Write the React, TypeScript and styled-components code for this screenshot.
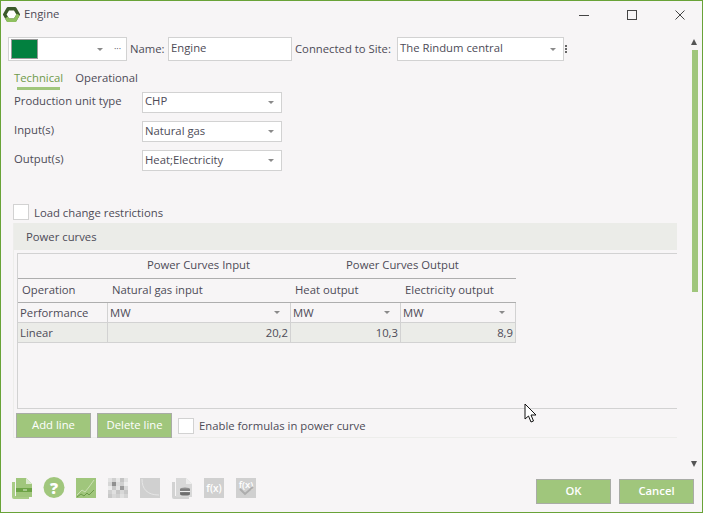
import React from "react";
import styled, { createGlobalStyle } from "styled-components";

const Global = createGlobalStyle`
  html, body { margin: 0; padding: 0; background: #f7f5f6; }
  * { box-sizing: border-box; }
`;

const Win = styled.div`
  position: relative;
  width: 703px;
  height: 513px;
  border: 1px solid #69a338;
  background: #f7f5f6;
  display: flex;
  flex-direction: column;
  font-family: "Open Sans", "Noto Sans", sans-serif;
  font-size: 11.3px;
  color: #4d4b57;
  overflow: hidden;
`;

const TitleBar = styled.div`
  height: 27px;
  flex: none;
  display: flex;
  align-items: center;
  padding: 0 17px 0 2px;
  gap: 4px;
`;
const TitleText = styled.span`
  flex: 1;
  padding-bottom: 2px;
`;
const WinButtons = styled.div`
  display: flex;
  gap: 38px;
  align-items: center;
`;

const Main = styled.div`
  flex: 1;
  display: flex;
  min-height: 0;
`;
const Content = styled.div`
  width: 676px;
  flex: none;
  padding: 9px 0 0 7px;
  display: flex;
  flex-direction: column;
`;

const TopRow = styled.div`
  display: flex;
  align-items: center;
  height: 24px;
`;
const Box = styled.div<{ $w: number; $h?: number }>`
  width: ${(p) => p.$w}px;
  height: ${(p) => p.$h ?? 24}px;
  flex: none;
  border: 1px solid #d2d2d2;
  background: #fff;
  display: flex;
  align-items: center;
  padding: 0 7px 0 1px;
`;
const BoxText = styled.span<{ $up?: number }>`
  flex: 1;
  padding: 0 0 ${(p) => p.$up ?? 2}px 1px;
  white-space: nowrap;
`;
const Swatch = styled.div`
  width: 27px;
  height: 20px;
  background: #02803f;
  border: 1px solid #9a9a9a;
  margin-left: 1px;
`;
const Caret = styled.i`
  width: 0;
  height: 0;
  border-left: 3px solid transparent;
  border-right: 3px solid transparent;
  border-top: 3px solid #8a8a8a;
  flex: none;
`;
const Ellipsis = styled.span`
  font-size: 9px;
  line-height: 1;
  margin-left: 11px;
  margin-right: -2px;
  padding-bottom: 2px;
`;
const TopLabel = styled.span<{ $l: number; $w: number }>`
  margin-left: ${(p) => p.$l}px;
  width: ${(p) => p.$w}px;
  flex: none;
  white-space: nowrap;
  padding-bottom: 2px;
`;
const Dots = styled.div`
  width: 2px;
  height: 8px;
  margin-left: 1px;
  background: repeating-linear-gradient(#666 0 2px, transparent 2px 3px);
`;

const Tabs = styled.div`
  display: flex;
  margin: 8px 0 0 5px;
  gap: 10px;
`;
const Tab = styled.div<{ $active?: boolean }>`
  position: relative;
  height: 20px;
  line-height: 17px;
  color: ${(p) => (p.$active ? "#6f9a4a" : "#4d4b57")};
  padding: 0 1px;
  ${(p) =>
    p.$active &&
    `&::after{content:"";position:absolute;left:4px;right:4px;bottom:-1px;height:3px;background:#a0c67c;}`}
`;

const FormRow = styled.div`
  display: flex;
  align-items: center;
  height: 21px;
  margin: 0 0 8px 6px;
`;
const FormLabel = styled.span`
  width: 128px;
  flex: none;
  padding-bottom: 4px;
`;
const Form = styled.div`
  margin-top: 3px;
`;

const CheckRow = styled.div<{ $m: number }>`
  display: flex;
  align-items: center;
  gap: 5px;
  margin-top: ${(p) => p.$m}px;
  margin-left: 5px;
`;
const Check = styled.div`
  width: 16px;
  height: 16px;
  background: #fff;
  border: 1px solid #d2d2d2;
  flex: none;
`;

const Group = styled.div`
  margin: 3px 0 0 5px;
  width: 664px;
  height: 215px;
  border-left: 1px solid #ededeb;
  border-bottom: 1px solid #ededeb;
  display: flex;
  flex-direction: column;
`;
const GroupHead = styled.div`
  height: 27px;
  flex: none;
  background: #ebece8;
  display: flex;
  align-items: center;
  padding-left: 12px;
`;
const GridWrap = styled.div`
  margin: 3px 0 0 3px;
  height: 156px;
  border-top: 1px solid #d2d2d2;
  border-left: 1px solid #d2d2d2;
  border-bottom: 1px solid #d2d2d2;
  flex: none;
`;
const Table = styled.div`
  width: 498px;
  display: grid;
  grid-template-columns: 90px 183px 110px 115px;
  grid-template-rows: 25px 24px 20px 20px;
`;
const BandCell = styled.div<{ $span?: number }>`
  display: flex;
  align-items: center;
  justify-content: center;
  grid-column: span ${(p) => p.$span ?? 1};
  border-bottom: 1px solid #aeaeae;
  padding: 0 2px 3px 0;
`;
const HeadCell = styled.div<{ $pad: number }>`
  display: flex;
  align-items: center;
  padding: 0 0 3px ${(p) => p.$pad}px;
  border-bottom: 1px solid #aeaeae;
`;
const Cell = styled.div<{ $shade?: boolean; $right?: boolean }>`
  display: flex;
  align-items: center;
  justify-content: ${(p) => (p.$right ? "flex-end" : "space-between")};
  padding: 0 ${(p) => (p.$right ? 2 : 0)}px 1px 2px;
  border-right: 1px solid #d2d2d2;
  border-bottom: 1px solid #d2d2d2;
  background: ${(p) => (p.$shade ? "#ebece8" : "transparent")};
`;
const UnitCaret = styled(Caret)`
  margin-right: 10px;
`;

const ActionRow = styled.div`
  display: flex;
  align-items: center;
  margin: 4px 0 0 2px;
`;
const Btn = styled.button<{ $m?: number }>`
  width: 75px;
  height: 25px;
  flex: none;
  margin-left: ${(p) => p.$m ?? 0}px;
  padding: 0 0 2px;
  background: #a0c67c;
  border: 1px solid #a9aca6;
  color: #fff;
  font: inherit;
`;
const BoldBtn = styled(Btn)`
  font-weight: 600;
`;
const FormulaCheck = styled.div`
  display: flex;
  align-items: center;
  gap: 5px;
  margin-left: 6px;
`;

const Bar = styled.div`
  flex: none;
  width: 24px;
  display: flex;
  flex-direction: column;
  align-items: flex-end;
  padding: 11px 3px 0 0;
`;
const Arrow = styled.i<{ $down?: boolean }>`
  width: 0;
  height: 0;
  margin-right: 1px;
  border-left: 3px solid transparent;
  border-right: 3px solid transparent;
  ${(p) => (p.$down ? "border-top: 6px solid #555;" : "border-bottom: 6px solid #555;")}
`;
const Thumb = styled.div`
  width: 6px;
  height: 242px;
  margin: 5px 0 169px;
  background: #a0c67c;
`;

const Footer = styled.div`
  height: 41px;
  flex: none;
  display: flex;
  align-items: flex-start;
  padding: 8px 8px 0 11px;
`;
const Icons = styled.div`
  display: flex;
  gap: 12px;
  flex: 1;
  margin-top: -1px;
`;
const HelpSlot = styled.span`
  display: flex;
  margin: -1px -1px 0 -1px;
`;
const CursorMark = styled.svg`
  position: absolute;
  left: 523px;
  top: 402px;
`;

const Logo = () => (
  <svg width="17" height="17" viewBox="0 0 17 17">
    <path d="M5 2.8h7l3.300 5.700-3.300 5.700H5L1.700 8.500z" fill="#fff" stroke="#3c5a2b" strokeWidth="3.400" strokeLinejoin="round" />
    <path d="M15.300 8.500l-3.300 5.700H5L3.400 11.500" fill="none" stroke="#8fc05f" strokeWidth="3.400" />
  </svg>
);

const DocStack = () => (
  <svg width="20" height="21" viewBox="0 0 20 21">
    <path d="M0 4h3v14h14v3H2a2 2 0 0 1-2-2z" fill="#a9cc87" />
    <path d="M4 0h10l6 6v13H4z" fill="#a0c67c" />
    <path d="M14 0l6 6h-6z" fill="#dcead0" />
    <rect x="4" y="10" width="16" height="4" fill="#6da346" />
    <rect x="11" y="11.500" width="4" height="1" fill="#dfeed0" />
  </svg>
);
const Help = () => (
  <svg width="22" height="21" viewBox="0 0 22 21">
    <circle cx="11" cy="10.500" r="10.500" fill="#a0c67c" />
    <text x="11" y="16.500" textAnchor="middle" fontFamily="Open Sans" fontWeight="800" fontSize="16" fill="#fff">?</text>
  </svg>
);
const Chart = () => (
  <svg width="20" height="20" viewBox="0 0 20 20">
    <rect width="20" height="20" fill="#a0c67c" />
    <path d="M1 17l5-5 3 2 4-5 5-7" fill="none" stroke="#d5e6c2" strokeWidth="0.800" />
    <path d="M1 19l4-3 3 2 3-3 2 2 5-5" fill="none" stroke="#5f8f3c" strokeWidth="0.800" />
  </svg>
);
const Heat = () => {
  const shades = [
    "#e2e2e2","#d0d0d0","#e8e8e8","#c4c4c4","#e2e2e2",
    "#d6d6d6","#8f8f8f","#dcdcdc","#d0d0d0","#eeeeee",
    "#ececec","#c8c8c8","#e4e4e4","#9a9a9a","#d8d8d8",
    "#d0d0d0","#e0e0e0","#c6c6c6","#d8d8d8","#c8c8c8",
    "#c8c8c8","#d8d8d8","#d0d0d0","#e0e0e0","#d4d4d4",
  ];
  return (
    <svg width="20" height="20" viewBox="0 0 20 20">
      {shades.map((c, i) => (
        <rect key={i} x={(i % 5) * 4} y={Math.floor(i / 5) * 4} width="4" height="4" fill={c} />
      ))}
    </svg>
  );
};
const Curve = () => (
  <svg width="20" height="20" viewBox="0 0 20 20">
    <rect width="20" height="20" fill="#d0d0d0" />
    <path d="M2 1c0 10 5 16 17 16" fill="none" stroke="#e6e6e6" strokeWidth="1" />
  </svg>
);
const DocDb = () => (
  <svg width="20" height="21" viewBox="0 0 20 21">
    <path d="M0 4h3v14h14v3H2a2 2 0 0 1-2-2z" fill="#d2d2d2" />
    <path d="M4 0h10l6 6v13H4z" fill="#d8d8d8" />
    <path d="M14 0l6 6h-6z" fill="#eeeeee" />
    <ellipse cx="13" cy="11" rx="5" ry="1.600" fill="#8f8f8f" />
    <rect x="8" y="11" width="10" height="5" fill="#808080" />
    <ellipse cx="13" cy="16" rx="5" ry="1.600" fill="#6e6e6e" />
    <rect x="8" y="13" width="10" height="1" fill="#eeeeee" />
  </svg>
);
const Fx = () => (
  <svg width="20" height="20" viewBox="0 0 20 20">
    <rect width="20" height="20" fill="#d0d0d0" />
    <text x="10" y="14" textAnchor="middle" fontFamily="Open Sans" fontWeight="600" fontSize="10" fill="#fff">f(x)</text>
  </svg>
);
const FxCheck = () => (
  <svg width="20" height="20" viewBox="0 0 20 20">
    <rect width="20" height="20" fill="#d0d0d0" />
    <text x="10" y="10" textAnchor="middle" fontFamily="Open Sans" fontWeight="600" fontSize="9.500" fill="#fff">f(x)</text>
    <path d="M4 11l5 5 8-7" fill="none" stroke="#adadad" strokeWidth="2" />
  </svg>
);

export default function App() {
  return (
    <Win>
      <Global />
      <TitleBar>
        <Logo />
        <TitleText>Engine</TitleText>
        <WinButtons>
          <svg width="10" height="10" viewBox="0 0 10 10"><path d="M0 5.500h10" stroke="#444" /></svg>
          <svg width="10" height="10" viewBox="0 0 10 10"><rect x=".5" y=".5" width="9" height="9" fill="none" stroke="#444" /></svg>
          <svg width="10" height="10" viewBox="0 0 10 10"><path d="M.5.5l9 9M9.500.5l-9 9" stroke="#444" /></svg>
        </WinButtons>
      </TitleBar>
      <Main>
        <Content>
          <TopRow>
            <Box $w={119}>
              <Swatch />
              <BoxText />
              <Caret />
              <Ellipsis>···</Ellipsis>
            </Box>
            <TopLabel $l={3} $w={38}>Name:</TopLabel>
            <Box $w={124}><BoxText $up={4}>Engine</BoxText></Box>
            <TopLabel $l={3} $w={102}>Connected to Site:</TopLabel>
            <Box $w={167}><BoxText $up={4}>The Rindum central</BoxText><Caret /></Box>
            <Dots />
          </TopRow>
          <Tabs>
            <Tab $active>Technical</Tab>
            <Tab>Operational</Tab>
          </Tabs>
          <Form>
            <FormRow>
              <FormLabel>Production unit type</FormLabel>
              <Box $w={140} $h={21}><BoxText $up={4}>CHP</BoxText><Caret /></Box>
            </FormRow>
            <FormRow>
              <FormLabel>Input(s)</FormLabel>
              <Box $w={140} $h={21}><BoxText>Natural gas</BoxText><Caret /></Box>
            </FormRow>
            <FormRow>
              <FormLabel>Output(s)</FormLabel>
              <Box $w={140} $h={21}><BoxText>Heat;Electricity</BoxText><Caret /></Box>
            </FormRow>
          </Form>
          <CheckRow $m={25}>
            <Check />
            <span>Load change restrictions</span>
          </CheckRow>
          <Group>
            <GroupHead>Power curves</GroupHead>
            <GridWrap>
              <Table>
                <BandCell />
                <BandCell>Power Curves Input</BandCell>
                <BandCell $span={2}>Power Curves Output</BandCell>
                <HeadCell $pad={4}>Operation</HeadCell>
                <HeadCell $pad={4}>Natural gas input</HeadCell>
                <HeadCell $pad={4}>Heat output</HeadCell>
                <HeadCell $pad={4}>Electricity output</HeadCell>
                <Cell>Performance</Cell>
                <Cell>MW<UnitCaret /></Cell>
                <Cell>MW<UnitCaret /></Cell>
                <Cell>MW<UnitCaret /></Cell>
                <Cell $shade>Linear</Cell>
                <Cell $shade $right>20,2</Cell>
                <Cell $shade $right>10,3</Cell>
                <Cell $shade $right>8,9</Cell>
              </Table>
            </GridWrap>
            <ActionRow>
              <Btn>Add line</Btn>
              <Btn $m={6}>Delete line</Btn>
              <FormulaCheck>
                <Check />
                <span>Enable formulas in power curve</span>
              </FormulaCheck>
            </ActionRow>
          </Group>
        </Content>
        <Bar>
          <Arrow />
          <Thumb />
          <Arrow $down />
        </Bar>
      </Main>
      <Footer>
        <Icons>
          <DocStack />
          <HelpSlot><Help /></HelpSlot>
          <Chart />
          <Heat />
          <Curve />
          <DocDb />
          <Fx />
          <FxCheck />
        </Icons>
        <BoldBtn>OK</BoldBtn>
        <BoldBtn $m={8}>Cancel</BoldBtn>
      </Footer>
      <CursorMark width="14" height="20" viewBox="0 0 14 20">
        <path d="M1 1v15l3.500-3 2.500 6 2.500-1-2.500-6h5z" fill="#fff" stroke="#111" strokeWidth="1" />
      </CursorMark>
    </Win>
  );
}
